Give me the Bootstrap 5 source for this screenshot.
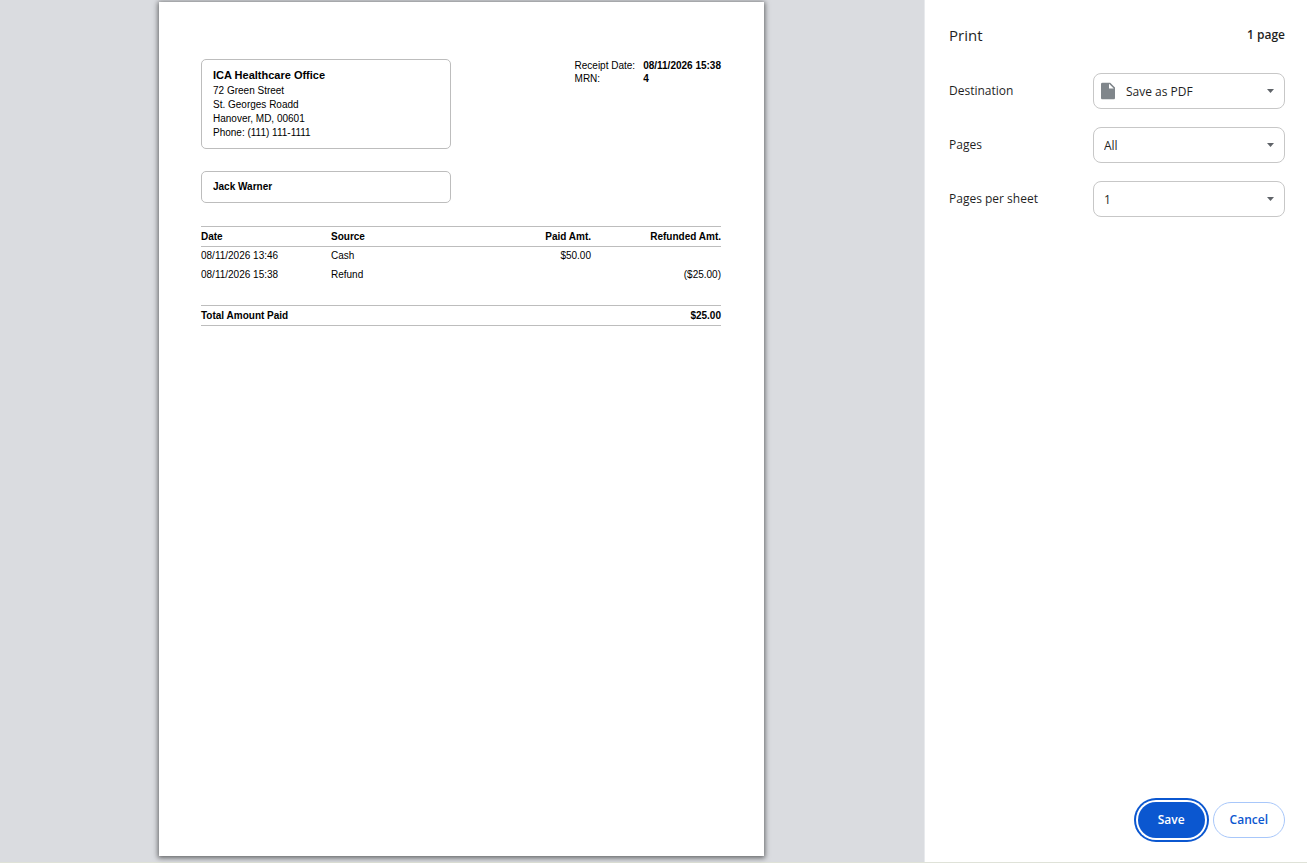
<!DOCTYPE html>
<html lang="en">
<head>
<meta charset="utf-8">
<meta name="viewport" content="width=device-width, initial-scale=1">
<title>Print</title>
<link href="https://cdn.jsdelivr.net/npm/bootstrap@5.3.0/dist/css/bootstrap.min.css" rel="stylesheet">
<style>
  body { font-family: "Open Sans", "Noto Sans", sans-serif; font-size: 12px; line-height: 20px; color: #1f1f1f; }
  .print-dialog { min-height: 100vh; border-bottom: 1px solid #dfe2d8; }
  .preview-pane { background: #dadce0; padding: 2px 17px 6px 16px; }

  /* A4 sheet that follows the window height */
  .sheet { height: calc(100vh - 9px); aspect-ratio: 605 / 854; background: #fff; padding: 57px 43px 43px 42px;
    box-shadow: 0 1px 5px 1px rgba(0, 0, 0, .55);
    font-family: "Liberation Sans", Arial, sans-serif; font-size: 10px; line-height: 14px; color: #000; }
  .info-box { width: 250px; border: 1px solid #bdbdbd; border-radius: 5px; padding: 8px 11px; }
  .office-box { padding-top: 7px; }
  .office-name { font-size: 11px; line-height: 17px; }
  .patient-box { margin: 22px 0 23px; }
  .receipt-meta { line-height: 13px; }
  .receipt-meta th, .receipt-meta td { padding: 0; }
  .receipt-meta th { font-weight: 400; padding-right: 8px; }
  .receipt-table { table-layout: fixed; width: 100%; }
  .receipt-table th, .receipt-table td { width: 25%; padding: 2px 0 3px; }
  .receipt-table thead th { padding: 3px 0 2px; }
  .ruled { border-top: 1px solid #bdbdbd; border-bottom: 1px solid #bdbdbd; }
  .total-row { padding: 3px 0 2px; margin-top: 20px; }

  .settings-pane { width: 383px; border-left: 1px solid #e8eaed; padding: 24px 22px 24px 24px; background: #fff; }
  .pane-title { font-size: 15px; line-height: 22px; }
  .settings-list { margin-top: 27px; gap: 18px; }
  .select-wrap { width: 192px; }
  .print-select { height: 36px; border: 1px solid #c7c7c7; border-radius: 8px; padding: 2px 24px 0 10px;
    font-size: 12px; line-height: 20px; color: #1f1f1f; background-size: 7px 4px; background-position: right 10px center;
    background-image: url("data:image/svg+xml,%3Csvg xmlns='http://www.w3.org/2000/svg' viewBox='0 0 7 4'%3E%3Cpath fill='%235f6368' d='M0 0h7L3.500 4z'/%3E%3C/svg%3E"); }
  .print-select.has-icon { padding-left: 32px; }
  .file-icon { left: 8px; }
  .pill-btn { height: 36px; border-radius: 18px; padding: 0 16px; font-size: 12px; line-height: 20px; font-weight: 600; }
  .pill-save, .pill-save:hover { background: #0b57d0; color: #fff; border: 0; padding: 0 20px; box-shadow: 0 0 0 2px #fff, 0 0 0 4px #0b57d0; }
  .pill-cancel, .pill-cancel:hover { background: #fff; color: #0b57d0; border: 1px solid #a8c7fa; }
</style>
</head>
<body>
<div class="print-dialog d-flex">
  <main class="preview-pane flex-grow-1 d-flex justify-content-center align-items-start">
    <article class="sheet">
      <header class="d-flex justify-content-between align-items-start">
        <address class="info-box office-box mb-0">
          <strong class="office-name d-block">ICA Healthcare Office</strong>
          <div>72 Green Street</div>
          <div>St. Georges Roadd</div>
          <div>Hanover, MD, 00601</div>
          <div>Phone: (111) 111-1111</div>
        </address>
        <table class="receipt-meta">
          <tr><th scope="row">Receipt Date:</th><td class="fw-bold">08/11/2026 15:38</td></tr>
          <tr><th scope="row">MRN:</th><td class="fw-bold">4</td></tr>
        </table>
      </header>
      <div class="info-box patient-box fw-bold">Jack Warner</div>
      <table class="receipt-table">
        <thead class="ruled">
          <tr><th>Date</th><th>Source</th><th class="text-end">Paid Amt.</th><th class="text-end">Refunded Amt.</th></tr>
        </thead>
        <tbody>
          <tr><td>08/11/2026 13:46</td><td>Cash</td><td class="text-end">$50.00</td><td></td></tr>
          <tr><td>08/11/2026 15:38</td><td>Refund</td><td></td><td class="text-end">($25.00)</td></tr>
        </tbody>
      </table>
      <div class="ruled total-row fw-bold d-flex justify-content-between"><span>Total Amount Paid</span><span>$25.00</span></div>
    </article>
  </main>

  <aside class="settings-pane flex-shrink-0 d-flex flex-column">
    <div class="d-flex justify-content-between align-items-center">
      <h1 class="pane-title fw-normal mb-0">Print</h1>
      <span class="fw-semibold">1 page</span>
    </div>
    <div class="settings-list d-flex flex-column">
      <div class="d-flex justify-content-between align-items-center">
        <label for="destination">Destination</label>
        <div class="select-wrap position-relative">
          <select id="destination" class="form-select print-select has-icon"><option>Save as PDF</option></select>
          <svg class="file-icon position-absolute top-50 translate-middle-y" width="14" height="17" viewBox="0 0 14 17" aria-hidden="true">
            <path fill="#80868b" fill-rule="evenodd" d="M1.500 0H9l5 5v10.500a1.500 1.500 0 0 1-1.500 1.500h-11A1.500 1.500 0 0 1 0 15.500v-14A1.500 1.500 0 0 1 1.500 0zM8 1.200V6h4.800z"/>
          </svg>
        </div>
      </div>
      <div class="d-flex justify-content-between align-items-center">
        <label for="pages">Pages</label>
        <div class="select-wrap"><select id="pages" class="form-select print-select"><option>All</option></select></div>
      </div>
      <div class="d-flex justify-content-between align-items-center">
        <label for="per-sheet">Pages per sheet</label>
        <div class="select-wrap"><select id="per-sheet" class="form-select print-select"><option>1</option></select></div>
      </div>
    </div>
    <div class="d-flex justify-content-end gap-2 mt-auto">
      <button type="button" class="btn pill-btn pill-save">Save</button>
      <button type="button" class="btn pill-btn pill-cancel">Cancel</button>
    </div>
  </aside>
</div>
<script src="https://cdn.jsdelivr.net/npm/bootstrap@5.3.0/dist/js/bootstrap.bundle.min.js"></script>
</body>
</html>
